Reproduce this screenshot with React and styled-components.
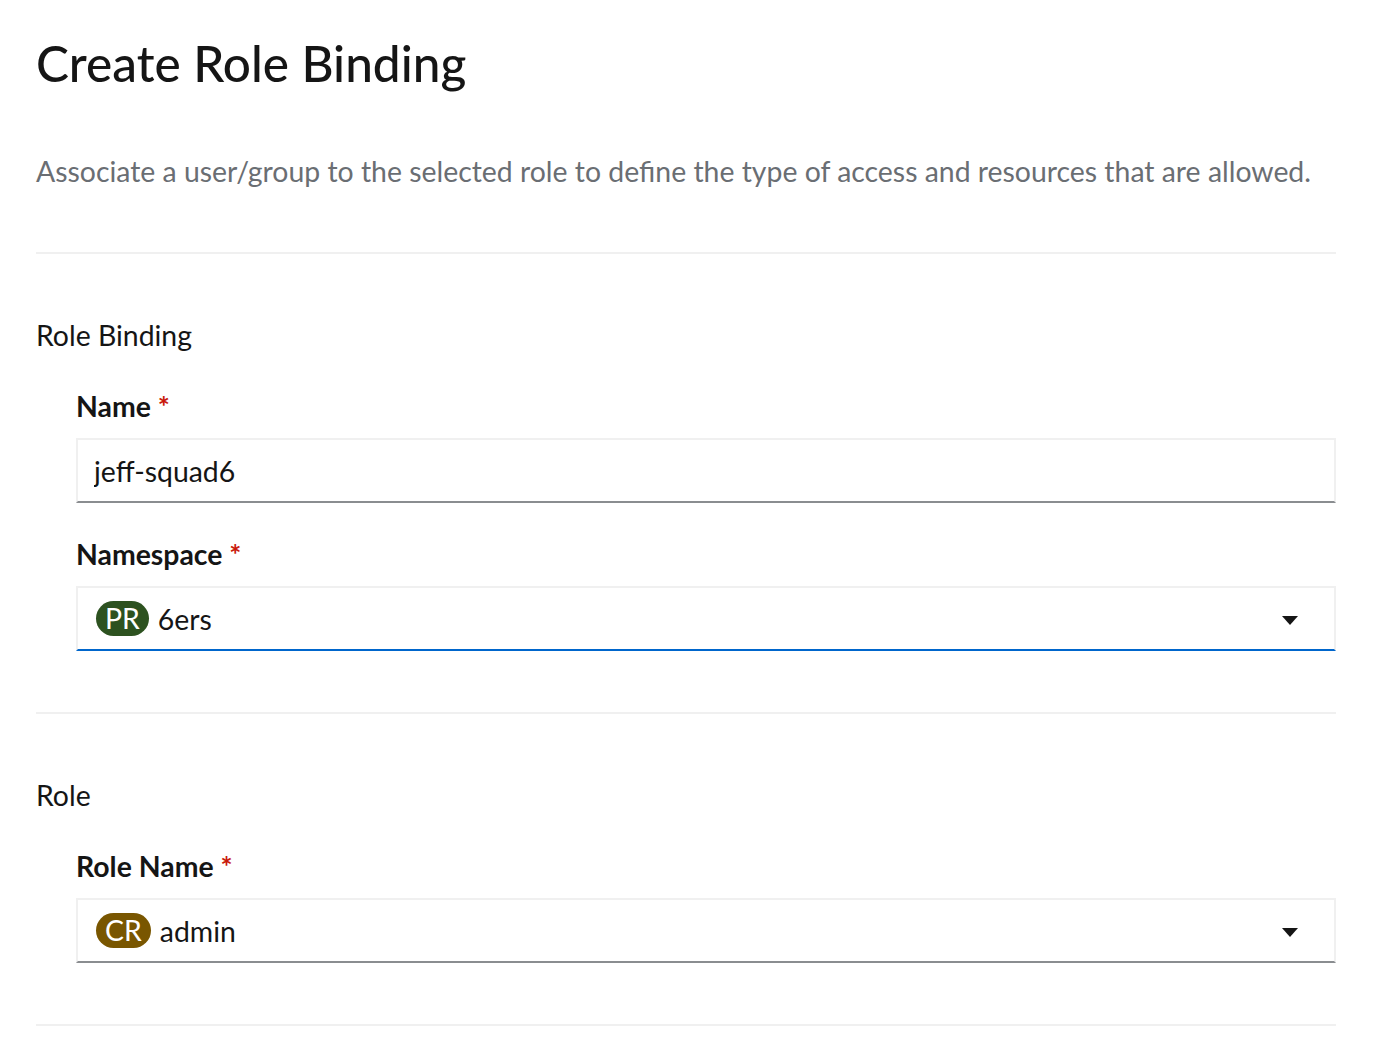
import React from 'react'
import styled, { createGlobalStyle } from 'styled-components'

const GlobalStyle = createGlobalStyle`
  body {
    margin: 0;
    background: #fff;
    font-family: Lato, 'Noto Sans', sans-serif;
    color: #151515;
  }
`

const App = () => {
  return (
    <Page>
      <GlobalStyle />
      <Title>Create Role Binding</Title>
      <Description>
        Associate a user/group to the selected role to define the type of access and resources that are allowed.
      </Description>
      <Divider />

      <Section>
        <SectionTitle>Role Binding</SectionTitle>
        <Fields>
          <Field>
            <Label>
              Name <Required>*</Required>
            </Label>
            <TextInput type="text" defaultValue="jeff-squad6" />
          </Field>
          <Field>
            <Label>
              Namespace <Required>*</Required>
            </Label>
            <SelectBox focused>
              <Badge color="#2d5220">PR</Badge>
              <SelectValue>6ers</SelectValue>
              <Caret />
            </SelectBox>
          </Field>
        </Fields>
      </Section>
      <Divider />

      <Section>
        <SectionTitle>Role</SectionTitle>
        <Fields>
          <Field>
            <Label>
              Role Name <Required>*</Required>
            </Label>
            <SelectBox>
              <Badge color="#795600">CR</Badge>
              <SelectValue>admin</SelectValue>
              <Caret />
            </SelectBox>
          </Field>
        </Fields>
      </Section>
      <Divider />
    </Page>
  )
}

const Caret = () => (
  <CaretIcon viewBox="0 0 16 10" aria-hidden="true">
    <path d="M0 0 L16 0 L8 9 Z" fill="#151515" />
  </CaretIcon>
)

export default App

const Page = styled.div`
  width: 1300px;
  padding: 33px 0 0 36px;
`

const Title = styled.h1`
  margin: 0;
  font-size: 49.5px;
  line-height: 60px;
  font-weight: 500;
`

const Description = styled.p`
  margin: 57px 0 60px;
  font-size: 28.4px;
  line-height: 42px;
  color: #6a6e73;
`

const Divider = styled.hr`
  margin: 0;
  border: none;
  height: 2px;
  background: #f0f0f0;
`

const Section = styled.section`
  padding: 60px 0 61px;
`

const SectionTitle = styled.h2`
  margin: 0;
  font-size: 28.4px;
  line-height: 42px;
  font-weight: 400;
`

const Fields = styled.div`
  display: flex;
  flex-direction: column;
  gap: 30px;
  margin-top: 29px;
  padding-left: 40px;
`

const Field = styled.div`
  display: flex;
  flex-direction: column;
  gap: 11px;
`

const Label = styled.label`
  font-size: 28.4px;
  line-height: 42px;
  font-weight: 700;
`

const Required = styled.span`
  color: #c9190b;
`

const TextInput = styled.input`
  box-sizing: border-box;
  width: 100%;
  height: 65px;
  margin: 0;
  padding: 0 16px;
  border: 2px solid #f0f0f0;
  border-bottom-color: #8a8d90;
  font-family: inherit;
  font-size: 28.4px;
  color: #151515;
  outline: none;
`

const SelectBox = styled.div`
  box-sizing: border-box;
  height: 65px;
  display: flex;
  align-items: center;
  padding: 0 36px 0 18px;
  border: 2px solid #f0f0f0;
  border-bottom-color: ${(p) => (p.focused ? '#0066cc' : '#8a8d90')};
`

const Badge = styled.span`
  display: inline-flex;
  align-items: center;
  justify-content: center;
  height: 35px;
  padding: 0 9px;
  border-radius: 18px;
  background: ${(p) => p.color};
  color: #fff;
  font-size: 28.4px;
  line-height: 1;
`

const SelectValue = styled.span`
  flex: 1;
  margin-left: 9px;
  font-size: 28.4px;
`

const CaretIcon = styled.svg`
  width: 16px;
  height: 10px;
  margin-top: 4px;
`
